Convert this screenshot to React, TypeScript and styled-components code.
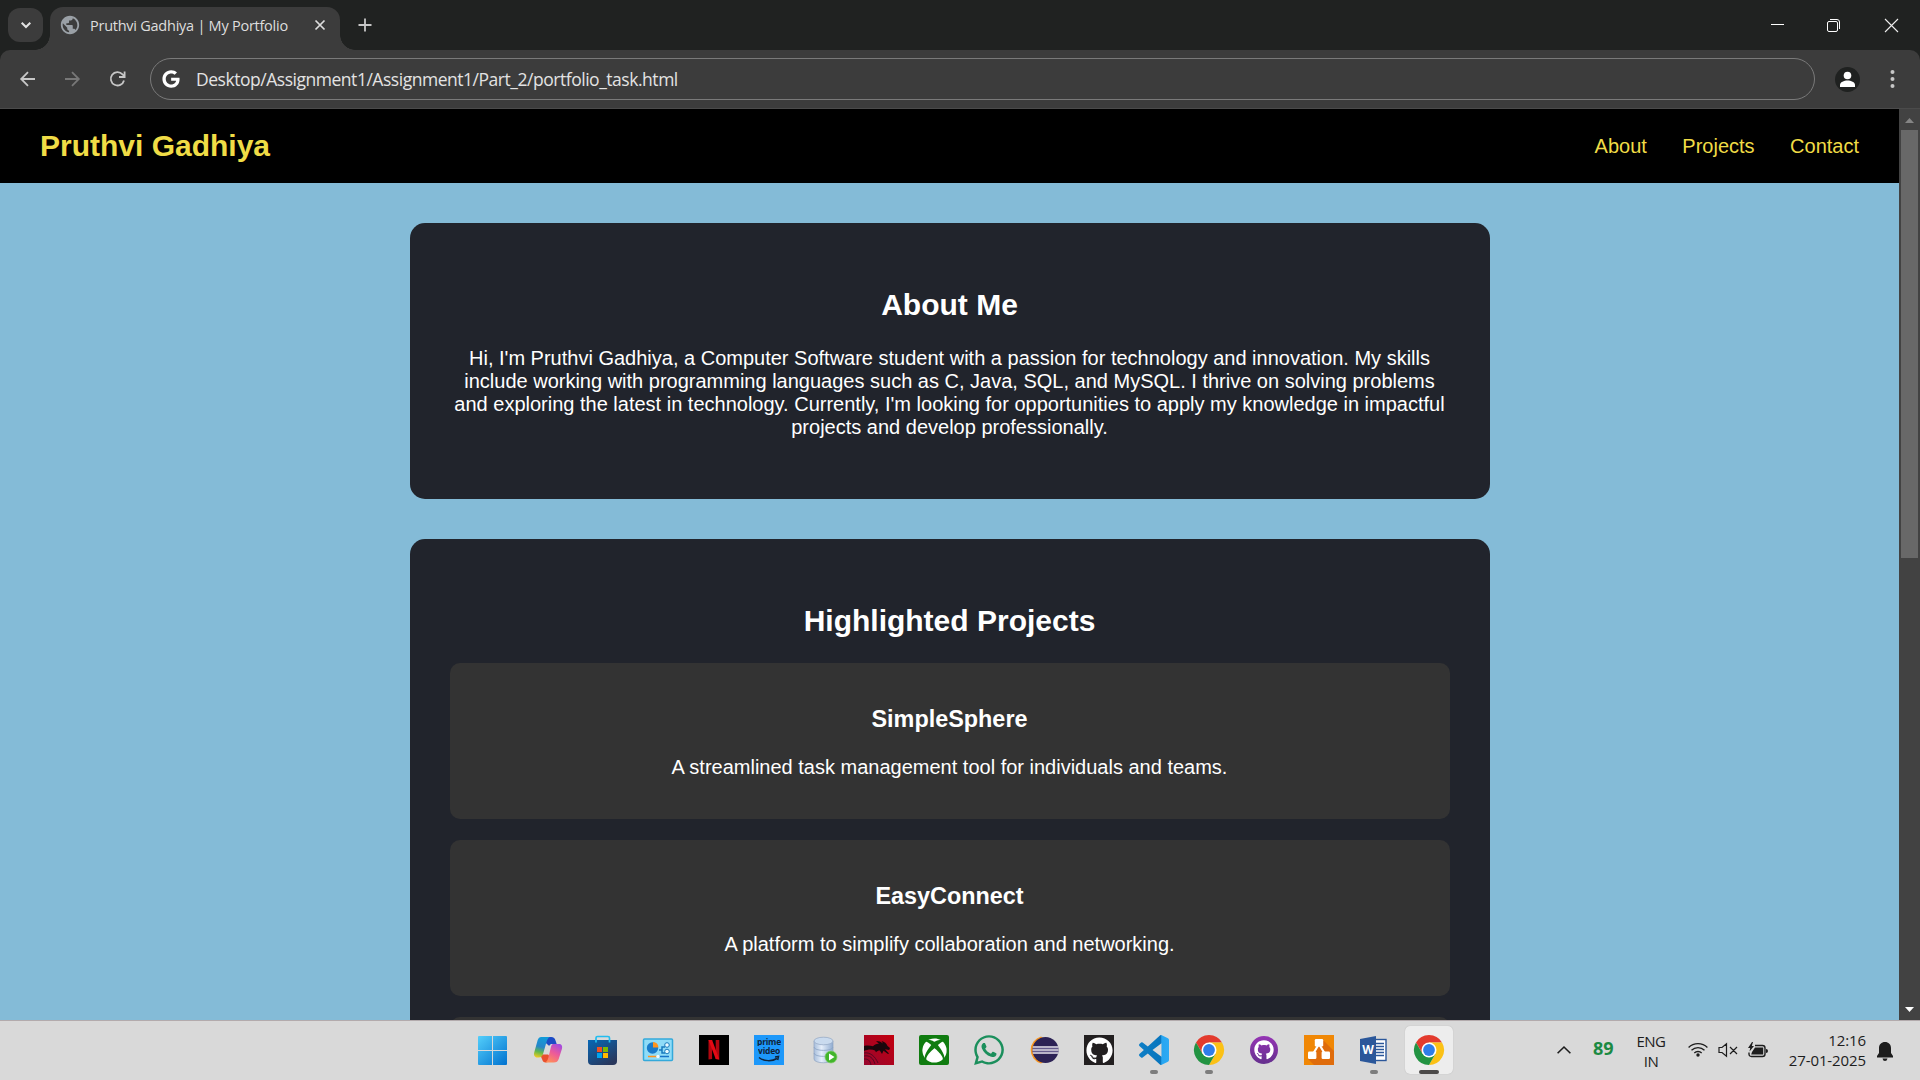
import React from "react";
import styled, { createGlobalStyle } from "styled-components";
import { FaGithub, FaWhatsapp, FaXbox, FaGoogle } from "react-icons/fa";
import { MdPublic } from "react-icons/md";

const SYSTEM_FONT = `"Open Sans", "Noto Sans", sans-serif`;

const GlobalStyle = createGlobalStyle`
  * { box-sizing: border-box; }
  html, body { margin: 0; padding: 0; overflow: hidden; }
  svg { display: block; overflow: visible; flex: none; }
`;

const Screen = styled.div`
  width: 1920px;
  height: 1080px;
  display: flex;
  flex-direction: column;
  overflow: hidden;
  background: #202221;
`;

/* ---------- Browser frame ---------- */

const TabStrip = styled.div`
  height: 50px;
  flex: none;
  display: flex;
  align-items: flex-start;
  padding-left: 8px;
  background: #202221;
`;

const TabSearch = styled.div`
  width: 35px;
  height: 34px;
  margin-top: 8px;
  border-radius: 12px;
  background: #3c3c3c;
  display: grid;
  place-items: center;
`;

const Tab = styled.div`
  position: relative;
  width: 290px;
  height: 43px;
  margin: 7px 0 0 7px;
  padding: 0 15px 7px 9px;
  display: flex;
  align-items: center;
  border-radius: 13px 13px 0 0;
  background: #3c3c3c;

  &::before,
  &::after {
    content: "";
    position: absolute;
    bottom: 0;
    width: 15px;
    height: 15px;
  }
  &::before {
    left: -15px;
    background: radial-gradient(circle at 0 0, transparent 14.5px, #3c3c3c 15px);
  }
  &::after {
    right: -15px;
    background: radial-gradient(circle at 100% 0, transparent 14.5px, #3c3c3c 15px);
  }
`;

const TabTitle = styled.span`
  margin: 2px 0 0 9px;
  flex: 1;
  font: 14.5px/20px ${SYSTEM_FONT};
  letter-spacing: -0.25px;
  color: #dedede;
  white-space: nowrap;
`;

const NewTab = styled.div`
  margin: 18px 0 0 18px;
`;

const WindowButtons = styled.div`
  margin-left: auto;
  height: 50px;
  padding-right: 22px;
  display: flex;
  align-items: center;
  gap: 43px;

  svg:last-child {
    margin-left: 2px;
  }
`;

const ToolbarShell = styled.div`
  height: 59px;
  flex: none;
  background: #202221;
`;

const Toolbar = styled.div`
  height: 59px;
  display: flex;
  align-items: center;
  padding: 0 22px 0 20px;
  border-radius: 10px 10px 0 0;
  border-bottom: 1px solid #4b4b4b;
  background: #3c3c3c;
`;

const NavButtons = styled.div`
  display: flex;
  gap: 29px;
  width: 130px;
`;

const AddressBar = styled.div`
  width: 1665px;
  height: 42px;
  padding-left: 11px;
  display: flex;
  align-items: center;
  gap: 16px;
  border: 1px solid #7a7a7a;
  border-radius: 21px;
  font: 17.5px/24px ${SYSTEM_FONT};
  letter-spacing: -0.47px;
  color: #e3e3e3;
  white-space: nowrap;
`;

const Avatar = styled.div`
  width: 25px;
  height: 25px;
  margin-left: 20px;
  border-radius: 50%;
  background: #1f2120;
`;

const MenuDots = styled.div`
  margin-left: auto;
`;

/* ---------- Portfolio page ---------- */

const Viewport = styled.div`
  height: 911px;
  flex: none;
  display: flex;
`;

const Page = styled.div`
  width: 1899px;
  height: 911px;
  overflow: hidden;
  background: #84bbd7;
  font: 20px/23px "Liberation Sans", Arial, sans-serif;
  color: #fff;
`;

const Header = styled.header`
  height: 74px;
  padding: 0 40px;
  display: flex;
  align-items: center;
  justify-content: space-between;
  background: #000;
  color: #f0dc46;
`;

const Brand = styled.div`
  font-size: 30px;
  line-height: 34px;
  font-weight: 700;
`;

const Links = styled.nav`
  display: flex;
  gap: 35.5px;
`;

const Section = styled.section`
  width: 1080px;
  margin: 40px auto 0;
  padding: 40px;
  border-radius: 15px;
  background: #21242c;
  text-align: center;
`;

const SectionTitle = styled.h2`
  margin: 25px 0;
  font-size: 30px;
  line-height: 34px;
`;

const Text = styled.p`
  margin: 20px 0;
`;

const Project = styled.article`
  margin-bottom: 21px;
  padding: 20px;
  height: 156px;
  border-radius: 10px;
  background: #333;
`;

const ProjectTitle = styled.h3`
  margin: 23px 0;
  font-size: 23.4px;
  line-height: 27px;
`;

const Scrollbar = styled.div`
  width: 21px;
  padding: 9px 2px 8px;
  display: flex;
  flex-direction: column;
  align-items: center;
  background: #424242;
`;

const Thumb = styled.div`
  width: 17px;
  height: 428px;
  margin: 7px 0 auto;
  background: #686868;
`;

/* ---------- Taskbar ---------- */

const Taskbar = styled.div`
  height: 60px;
  flex: none;
  display: flex;
  padding-left: 466px;
  border-top: 1px solid #b3abad;
  background: #d9d9d9;
  color: #1d1d1d;
  font: 15px/20px ${SYSTEM_FONT};
`;

const AppSlot = styled.div`
  width: 55px;
  padding-top: 5px;
`;

const AppTile = styled.div<{ $active?: boolean }>`
  width: 48px;
  height: 48px;
  margin-left: 4px;
  padding-top: 9px;
  display: flex;
  flex-direction: column;
  align-items: center;
  border-radius: 5px;
  background: ${(p) => (p.$active ? "#ededed" : "transparent")};
  box-shadow: ${(p) => (p.$active ? "0 0 1px #aaa" : "none")};
`;

const Indicator = styled.div<{ $active?: boolean }>`
  width: ${(p) => (p.$active ? 20 : 8)}px;
  height: 4px;
  margin-top: 5px;
  border-radius: 2px;
  background: ${(p) => (p.$active ? "#4c4a49" : "#7d7d7d")};
`;

const IconBox = styled.div<{ $bg?: string; $radius?: number; $color?: string }>`
  width: 30px;
  height: 30px;
  flex: none;
  display: flex;
  align-items: center;
  justify-content: center;
  border-radius: ${(p) => p.$radius ?? 0}px;
  background: ${(p) => p.$bg ?? "transparent"};
  color: ${(p) => p.$color ?? "#fff"};
`;

const PrimeBox = styled(IconBox)`
  flex-direction: column;
  justify-content: flex-start;
  padding-top: 2px;
  color: #10243a;
  font: 700 8.5px/9px ${SYSTEM_FONT};
  letter-spacing: -0.25px;

  span {
    height: 9px;
    overflow: hidden;
  }
  svg {
    margin-top: 1px;
  }
`;

const Tray = styled.div`
  margin-left: auto;
  padding: 0 27px 2px 0;
  display: flex;
  align-items: center;
`;

const Chevron = styled.div`
  margin-top: 1px;
`;

const Temperature = styled.div`
  width: 21px;
  margin: -3px 0 0 22px;
  color: #1c8a43;
  font-size: 18px;
  font-weight: 700;
  letter-spacing: -0.1px;
`;

const Language = styled.div`
  width: 34px;
  margin: 2px 0 0 20px;
  text-align: center;
  font-size: 15px;
  letter-spacing: -0.5px;
`;

const Status = styled.div`
  display: flex;
  align-items: center;
  gap: 10px;
  margin-left: 20px;
`;

const Clock = styled.div`
  width: 90px;
  margin-left: 8px;
  text-align: right;
  font-size: 15px;
  letter-spacing: -0.1px;
  white-space: nowrap;
`;

const Bell = styled.div`
  margin: 3px 0 0 11px;
`;

/* ---------- App icons ---------- */

const Art = ({ children, box = "0 0 30 30" }: { children: React.ReactNode; box?: string }) => (
  <svg width="30" height="30" viewBox={box}>
    {children}
  </svg>
);

const WindowsIcon = () => (
  <Art>
    <defs>
      <linearGradient id="win" gradientUnits="userSpaceOnUse" x1="0" y1="1" x2="27" y2="30">
        <stop offset="0" stopColor="#52cdfa" />
        <stop offset="1" stopColor="#0273d0" />
      </linearGradient>
    </defs>
    <path fill="url(#win)" d="M0 1h13v14H-1V2q0-1 1-1ZM14 1h13q1 0 1 1v13H14ZM-1 16h14v14H0q-1 0-1-1ZM14 16h14v13q0 1-1 1H14Z" />
  </Art>
);

const CopilotIcon = () => (
  <Art>
    <defs>
      <linearGradient id="cpA" x1="0.4" y1="0" x2="0.2" y2="1">
        <stop offset="0" stopColor="#129ad8" />
        <stop offset=".45" stopColor="#2685c9" />
        <stop offset=".72" stopColor="#62b84c" />
        <stop offset="1" stopColor="#f5cc20" />
      </linearGradient>
      <linearGradient id="cpB" x1="0.8" y1="0" x2="0.3" y2="1">
        <stop offset="0" stopColor="#a24be0" />
        <stop offset=".5" stopColor="#ec5a9a" />
        <stop offset="1" stopColor="#ff8d5a" />
      </linearGradient>
    </defs>
    <g transform="translate(.7 0)">
      <path fill="#1c4bc5" d="M12 2h4.500c2.500 0 3.700 1.500 4.300 3.500L22 9h-4.500c-1.500 0-2.500.6-3 2L10 7Z" />
      <path fill="#e9512d" d="M7 19.500h6.500l2 3c-1 3.500-2 5-4.500 5-2 0-3-1.200-3.500-3L6 21Z" />
      <path fill="url(#cpA)" d="M6.500 2H15c-2 1-2.500 3-3.200 5L8.500 18.500c-.8 2.600-2 4-4.500 4H2.500C0 22.500-1.200 20 -.5 17.500L3 5c.8-2 1.700-3 3.500-3Z" />
      <path fill="url(#cpB)" d="M18.500 9H24c3 0 4 2 3.200 5L24 24c-.8 2.500-2.200 3.500-5 3.500h-8.500c2-1 2.600-3 3.200-5L16 13c.6-2.500 1.200-4 2.500-4Z" />
    </g>
  </Art>
);

const StoreIcon = () => (
  <Art>
    <defs>
      <linearGradient id="store" x1="0" y1="0" x2=".7" y2="1">
        <stop offset="0" stopColor="#0768b6" />
        <stop offset="1" stopColor="#29375c" />
      </linearGradient>
    </defs>
    <path fill="none" stroke="#22bdf0" strokeWidth="1.700" d="M7 7V3q0-1.500 1.500-1.500h10.500q1.500 0 1.500 1.500v4" />
    <path fill="url(#store)" d="M-1 5h29v21q0 4-4 4H3q-4 0-4-4Z" />
    <path fill="#f25022" d="M8 12h5v5H8z" />
    <path fill="#7fba00" d="M14 12h5v5h-5z" />
    <path fill="#00a4ef" d="M8 18h5v5H8z" />
    <path fill="#ffb900" d="M14 18h5v5h-5z" />
    <path stroke="#22bdf0" strokeWidth="1.700" d="M7 5v2.500M20.500 5v2.500" />
  </Art>
);

const ControlPanelIcon = () => (
  <Art>
    <rect x="-.5" y="4" width="29" height="21.500" rx="1" fill="#8fdcf8" stroke="#34a9da" strokeWidth="1.500" />
    <circle cx="8.500" cy="13" r="5.700" fill="#187bcb" />
    <path fill="#ff941e" d="M9 12.500V7a6 6 0 0 1 5.500 5.500Z" />
    <path fill="none" stroke="#1879bd" strokeWidth="1.500" d="M15 15h3v-3h3M18 15v3h3" />
    <circle cx="23" cy="10" r="2.300" fill="#e9faff" stroke="#1879bd" />
    <circle cx="23" cy="16.500" r="2.300" fill="#e9faff" stroke="#1879bd" />
    <path stroke="#ff941e" strokeWidth="1.500" d="M4 21.500h10" />
    <path stroke="#1774c8" strokeWidth="1.500" d="M14 21.500h11" />
    <circle cx="14" cy="21.500" r="1.800" fill="#f0fbff" />
  </Art>
);

const NetflixIcon = () => (
  <Art>
    <path d="M0 0h30v30H0z" />
    <path fill="#b1060f" d="M9.500 5h3.600v19L9.500 24.500zM16.700 5h3.600v19.500l-3.600-.5z" />
    <path fill="#e50914" d="M9.500 5h3.600l7.200 19.500-3.600-.5Z" />
  </Art>
);

const PrimeIcon = () => (
  <PrimeBox $bg="#1d98fa">
    <span>prime</span>
    <span>video</span>
    <svg width="22" height="6" viewBox="0 0 22 6">
      <path fill="none" stroke="#10243a" strokeWidth="1.500" d="M1 1.500c5 4 13 4 18 1M17 1l3.500-.5-.8 3.500" />
    </svg>
  </PrimeBox>
);

const DatabaseIcon = () => (
  <Art>
    <defs>
      <linearGradient id="db">
        <stop offset="0" stopColor="#a8bedb" />
        <stop offset=".4" stopColor="#e5eefa" />
        <stop offset="1" stopColor="#8fabd0" />
      </linearGradient>
    </defs>
    <path fill="url(#db)" stroke="#91a5c1" strokeWidth=".7" d="M5 6v18c0 5 19 5 19 0V6Z" />
    <ellipse cx="14.500" cy="6" rx="9.500" ry="3.800" fill="#c9daee" stroke="#91a5c1" strokeWidth=".7" />
    <path fill="none" stroke="#8ba3c4" strokeWidth=".8" d="M5 12c0 4.500 19 4.500 19 0M5 18c0 4.500 19 4.500 19 0" />
    <circle cx="22" cy="22" r="6" fill="#42b52b" stroke="#7fce66" strokeWidth=".7" />
    <path fill="#fff" d="m20 18.500 5.500 3.500-5.500 3.500Z" />
  </Art>
);

const DragonIcon = () => (
  <Art>
    <defs>
      <linearGradient id="drg" x1="1" y1="0" x2="0" y2="1">
        <stop offset="0" stopColor="#c4000e" />
        <stop offset="1" stopColor="#97062e" />
      </linearGradient>
    </defs>
    <path fill="url(#drg)" d="M0 0h30v30H0z" />
    <path
      fill="#1a070c"
      d="M0 11c3-.8 6-.6 9 .3 1.500-2 3.500-2.800 6-2.600L12 6c3 0 5 .8 7 2.500L17.500 6c3 .8 5 2.500 6 5l2.500 2-.8 2-4.200-.8 4 4.300-1 .5-4.500-3.300L18 19l-2.200-3.500c-1.500 0-2.800.5-3.800 1.800L11 15.500C8 14 4 14 0 16Z"
    />
    <path fill="none" stroke="#4c0720" strokeWidth=".9" d="M0 18c6-1 11 3 14 10M0 21c6-1 9 2 11 8M0 24c4 0 6 1 7 6" />
  </Art>
);

const EclipseIcon = () => (
  <Art>
    <defs>
      <clipPath id="ecl">
        <circle cx="16.500" cy="15" r="13" />
      </clipPath>
    </defs>
    <path fill="#f7941e" d="M12 1.500a14 14 0 0 0 0 27l3-2V3.500Z" />
    <circle cx="16.500" cy="15" r="13" fill="#2c2255" />
    <g clipPath="url(#ecl)">
      <path stroke="#e8e5f0" strokeWidth="1.700" d="M3 12h27M3 15h27M3 18h27" />
      <path stroke="#74699c" strokeWidth=".8" d="M3 13.500h27M3 16.500h27" />
    </g>
  </Art>
);

const VsCodeIcon = () => (
  <Art box="0 0 24 24">
    <defs>
      <linearGradient id="vsc">
        <stop offset="0" stopColor="#0f7fc6" />
        <stop offset=".72" stopColor="#0875bd" />
        <stop offset=".76" stopColor="#27a5f0" />
        <stop offset="1" stopColor="#2baaf5" />
      </linearGradient>
    </defs>
    <path
      fill="url(#vsc)"
      d="M23.150 2.587 18.210.21a1.494 1.494 0 0 0-1.705.29l-9.460 8.630-4.120-3.128a1 1 0 0 0-1.276.057L.327 7.261A1 1 0 0 0 .326 8.740L3.899 12 .326 15.260a1 1 0 0 0 .001 1.479L1.650 17.940a1 1 0 0 0 1.276.057l4.120-3.128 9.460 8.630a1.492 1.492 0 0 0 1.704.290l4.942-2.377A1.500 1.500 0 0 0 24 20.060V3.939a1.500 1.500 0 0 0-.850-1.352zm-5.146 14.861L10.826 12l7.178-5.448v10.896z"
    />
  </Art>
);

const ChromeIcon = () => (
  <Art>
    <path fill="#e33b2e" d="M2 7.500a15 15 0 0 1 26 0H15v7.500l-6.500 3.750Z" />
    <path fill="#fbc116" d="M28 7.500A15 15 0 0 1 15 30l6.500-11.250L15 7.500Z" />
    <path fill="#229342" d="M15 30A15 15 0 0 1 2 7.500l6.500 11.250h13Z" />
    <circle cx="15" cy="15" r="7.500" fill="#fff" />
    <circle cx="15" cy="15" r="5.900" fill="#2f7de9" />
  </Art>
);

const GithubDesktopIcon = () => (
  <IconBox>
    <svg width="28" height="28" viewBox="0 0 28 28">
      <defs>
        <linearGradient id="ghd" x1="0" y1="0" x2="0" y2="1">
          <stop offset="0" stopColor="#9534b4" />
          <stop offset="1" stopColor="#65308e" />
        </linearGradient>
      </defs>
      <circle cx="14" cy="14" r="14" fill="url(#ghd)" />
      <FaGithub x="4" y="4" size={20} />
    </svg>
  </IconBox>
);

const DrawioIcon = () => (
  <Art>
    <path fill="#f08705" d="M0 0h30v30H0z" />
    <path fill="#df6c0c" d="m19 5 11 11v14H10l-6-6 9-12Z" />
    <path stroke="#fff" strokeWidth="2.200" d="m15 9-6 10M15 9l6 10" />
    <rect x="10.800" y="4" width="8.400" height="7.500" rx="1.200" fill="#fff" />
    <rect x="4" y="16.500" width="8.400" height="7.500" rx="1.200" fill="#fff" />
    <rect x="17.600" y="16.500" width="8.400" height="7.500" rx="1.200" fill="#fff" />
  </Art>
);

const WordIcon = () => (
  <Art>
    <rect x="15" y="4.500" width="12" height="21" fill="#fff" stroke="#2b579a" strokeWidth="1.400" />
    <path stroke="#2b579a" strokeWidth="1.500" d="M16 8.500h9M16 11.500h9M16 14.500h9M16 17.500h9M16 20.500h9" />
    <path fill="#2b579a" d="m1 4 16-3v28L1 26Z" />
    <text x="9" y="19.300" fill="#fff" textAnchor="middle" fontFamily="Open Sans, sans-serif" fontWeight="700" fontSize="12">
      W
    </text>
  </Art>
);

type TaskbarApp = { icon: React.ReactNode; state?: "open" | "active" };

const apps: TaskbarApp[] = [
  { icon: <WindowsIcon /> },
  { icon: <CopilotIcon /> },
  { icon: <StoreIcon /> },
  { icon: <ControlPanelIcon /> },
  { icon: <NetflixIcon /> },
  { icon: <PrimeIcon /> },
  { icon: <DatabaseIcon /> },
  { icon: <DragonIcon /> },
  { icon: <IconBox $bg="#107c10" $radius={2}><FaXbox size={25} /></IconBox> },
  { icon: <IconBox $color="#1b8f5c"><FaWhatsapp size={34} /></IconBox> },
  { icon: <EclipseIcon /> },
  { icon: <IconBox $bg="#221f20"><FaGithub size={27} /></IconBox> },
  { icon: <VsCodeIcon />, state: "open" },
  { icon: <ChromeIcon />, state: "open" },
  { icon: <GithubDesktopIcon /> },
  { icon: <DrawioIcon /> },
  { icon: <WordIcon />, state: "open" },
  { icon: <ChromeIcon />, state: "active" },
];

const projects = [
  { name: "SimpleSphere", text: "A streamlined task management tool for individuals and teams." },
  { name: "EasyConnect", text: "A platform to simplify collaboration and networking." },
  { name: "", text: "" },
];

export default function App() {
  return (
    <Screen>
      <GlobalStyle />

      <TabStrip>
        <TabSearch>
          <svg width="10" height="6" viewBox="0 0 10 6" fill="none" stroke="#e3e3e3" strokeWidth="2">
            <path d="m.7.700 4.300 4.300L9.300.700" />
          </svg>
        </TabSearch>
        <Tab>
          <MdPublic size={22} color="#9aa0a6" />
          <TabTitle>Pruthvi Gadhiya | My Portfolio</TabTitle>
          <svg width="10" height="10" viewBox="0 0 10 10" stroke="#dedede" strokeWidth="1.700">
            <path d="m.5.500 9 9m0-9-9 9" />
          </svg>
        </Tab>
        <NewTab>
          <svg width="14" height="14" viewBox="0 0 14 14" stroke="#c7c7c7" strokeWidth="1.800">
            <path d="M7 .5v13M.5 7h13" />
          </svg>
        </NewTab>
        <WindowButtons>
          <svg width="13" height="13" viewBox="0 0 13 13">
            <path d="M0 5.500h13" stroke="#fff" />
          </svg>
          <svg width="13" height="13" viewBox="0 0 13 13" fill="none" stroke="#fff">
            <rect x=".5" y="2.500" width="10" height="10" rx="1.500" />
            <path d="M3 .5h7q2.500 0 2.500 2.500v7" />
          </svg>
          <svg width="13" height="13" viewBox="0 0 13 13" stroke="#eee" strokeWidth="1.100">
            <path d="m0 0 13 13M13 0 0 13" />
          </svg>
        </WindowButtons>
      </TabStrip>

      <ToolbarShell>
        <Toolbar>
          <NavButtons>
            <svg width="16" height="16" viewBox="0 0 16 16" fill="none" stroke="#c7c7c7" strokeWidth="1.800">
              <path d="M15 8H1.500M8 1.200 1.200 8 8 14.800" />
            </svg>
            <svg width="16" height="16" viewBox="0 0 16 16" fill="none" stroke="#777" strokeWidth="1.800">
              <path d="M0 8h13.500M7 1.200 13.800 8 7 14.800" />
            </svg>
            <svg width="16" height="16" viewBox="0 0 16 16" fill="none" stroke="#c7c7c7" strokeWidth="1.800">
              <path d="M14 9.500A6.700 6.700 0 1 1 12.500 3.300L14.300 5.500M14.600.5v5.500H9" />
            </svg>
          </NavButtons>
          <AddressBar>
            <FaGoogle size={18} color="#fff" />
            <span>Desktop/Assignment1/Assignment1/Part_2/portfolio_task.html</span>
          </AddressBar>
          <Avatar>
            <svg width="25" height="25" viewBox="0 0 25 25" fill="#fff">
              <circle cx="12.500" cy="8.500" r="3.800" />
              <path d="M5 20v-2c0-3 4-4.500 7.500-4.500S20 15 20 18v2Z" />
            </svg>
          </Avatar>
          <MenuDots>
            <svg width="12" height="18" viewBox="0 0 12 18" fill="#c7c7c7">
              <circle cx="6.500" cy="2" r="2" />
              <circle cx="6.500" cy="9" r="2" />
              <circle cx="6.500" cy="16" r="2" />
            </svg>
          </MenuDots>
        </Toolbar>
      </ToolbarShell>

      <Viewport>
        <Page>
          <Header>
            <Brand>Pruthvi Gadhiya</Brand>
            <Links>
              <span>About</span>
              <span>Projects</span>
              <span>Contact</span>
            </Links>
          </Header>
          <Section>
            <SectionTitle>About Me</SectionTitle>
            <Text>
              Hi, I'm Pruthvi Gadhiya, a Computer Software student with a passion for technology and innovation. My
              skills include working with programming languages such as C, Java, SQL, and MySQL. I thrive on solving
              problems and exploring the latest in technology. Currently, I'm looking for opportunities to apply my
              knowledge in impactful projects and develop professionally.
            </Text>
          </Section>
          <Section>
            <SectionTitle>Highlighted Projects</SectionTitle>
            {projects.map((project, i) => (
              <Project key={i}>
                <ProjectTitle>{project.name}</ProjectTitle>
                <Text>{project.text}</Text>
              </Project>
            ))}
          </Section>
        </Page>
        <Scrollbar>
          <svg width="9" height="5" viewBox="0 0 9 5" fill="#858585">
            <path d="M4.500 0 9 5H0Z" />
          </svg>
          <Thumb />
          <svg width="9" height="5" viewBox="0 0 9 5" fill="#fff">
            <path d="M0 0h9L4.500 5Z" />
          </svg>
        </Scrollbar>
      </Viewport>

      <Taskbar>
        {apps.map((app, i) => (
          <AppSlot key={i}>
            <AppTile $active={app.state === "active"}>
              {app.icon}
              {app.state && <Indicator $active={app.state === "active"} />}
            </AppTile>
          </AppSlot>
        ))}
        <Tray>
          <Chevron>
            <svg width="14" height="8" viewBox="0 0 14 8" fill="none" stroke="#1d1d1d" strokeWidth="1.600">
              <path d="m.6 7.300 6.400-6.300 6.400 6.300" />
            </svg>
          </Chevron>
          <Temperature>89</Temperature>
          <Language>
            ENG
            <br />
            IN
          </Language>
          <Status>
            <svg width="20" height="15" viewBox="0 0 20 15" fill="none" stroke="#1d1d1d" strokeWidth="1.300">
              <path d="M.6 5.500a13.200 13.200 0 0 1 18.800 0M3.500 8.300a9.200 9.200 0 0 1 13 0M6.300 11a5.300 5.300 0 0 1 7.400 0" />
              <circle cx="10" cy="13" r="1.700" fill="#1d1d1d" stroke="none" />
            </svg>
            <svg width="20" height="14" viewBox="0 0 20 14" fill="none" stroke="#1d1d1d" strokeWidth="1.200">
              <path d="M1 4.500h3L8.500.700v12.600L4 9.500H1ZM12 4l7 7m0-7-7 7" />
            </svg>
            <svg width="20" height="16" viewBox="0 0 20 16">
              <path fill="none" stroke="#1d1d1d" strokeWidth="1.400" d="M7 3.500h7.500q2.500 0 2.500 2.500v6q0 2.500-2.500 2.500H3.500Q1 14.500 1 12V10.500" />
              <path fill="#1d1d1d" d="M7 5.500h8.200v7H3.200L4 10ZM18 7q2 0 2 2t-2 2ZM4 0 0 6h2.200L1.500 9.500 6 4H3.800L5 0Z" />
            </svg>
          </Status>
          <Clock>
            12:16
            <br />
            27-01-2025
          </Clock>
          <Bell>
            <svg width="16" height="19" viewBox="0 0 16 19" fill="#1d1d1d">
              <path d="M8 0C4.500 0 2 2.500 2 6v5L0 14v1.500h16V14l-2-3V6c0-3.500-2.500-6-6-6ZM5.500 16.500h5Q10 19 8 19t-2.500-2.500Z" />
            </svg>
          </Bell>
        </Tray>
      </Taskbar>
    </Screen>
  );
}
